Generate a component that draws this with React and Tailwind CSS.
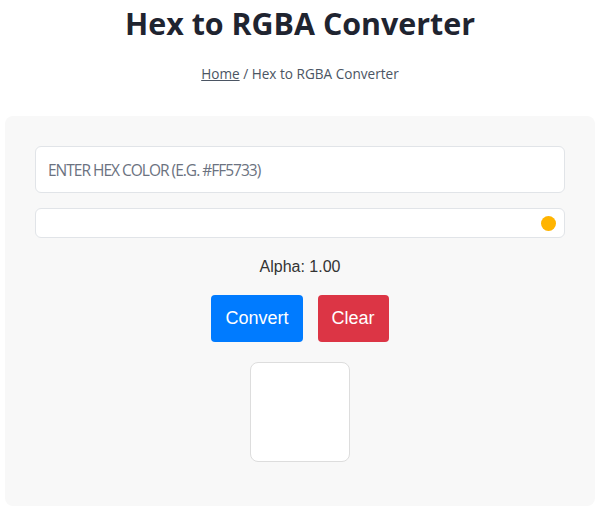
import React, { useState } from 'react';

const App = () => {
  const [hex, setHex] = useState('');
  const [alpha, setAlpha] = useState(1);

  return (
    <div className="min-h-screen bg-white px-[5px] font-['Open_Sans',sans-serif] text-[#1f2430]">
      {/* Header */}
      <h1 className="text-center text-[30.4px] font-bold leading-[48px]">Hex to RGBA Converter</h1>
      <p className="mt-[15px] text-center text-[13.6px] leading-[21px] text-[#4b5563]">
        <a href="#" className="underline">Home</a> / Hex to RGBA Converter
      </p>

      {/* Converter card */}
      <div className="mt-[32px] rounded-lg bg-[#f8f8f8] px-[30px] pt-[30px] pb-[44px]">
        <input
          type="text"
          value={hex}
          onChange={(e) => setHex(e.target.value)}
          placeholder="Enter Hex Color (e.g. #FF5733)"
          className="block h-[47px] w-full rounded-md border border-[#e1e4e8] bg-white px-3 text-[15.5px] tracking-[-1px] text-[#1f2430] outline-none placeholder:uppercase placeholder:text-[#6b7280]"
        />
        <input
          type="range"
          min="0"
          max="1"
          step="0.01"
          value={alpha}
          onChange={(e) => setAlpha(parseFloat(e.target.value))}
          className="mt-[15px] block h-[30px] w-full cursor-pointer appearance-none rounded-md border border-[#e1e4e8] bg-white px-[8px] outline-none [&::-webkit-slider-thumb]:h-[15px] [&::-webkit-slider-thumb]:w-[15px] [&::-webkit-slider-thumb]:appearance-none [&::-webkit-slider-thumb]:rounded-full [&::-webkit-slider-thumb]:bg-[#ffb400]"
        />
        <p className="mt-[17px] text-center font-['Liberation_Sans',Arial,sans-serif] text-base leading-[24px] text-[#333]">
          Alpha: {alpha.toFixed(2)}
        </p>

        <div className="mt-[16px] flex justify-center gap-[15px] font-['Liberation_Sans',Arial,sans-serif]">
          <button className="rounded bg-[#007bff] px-[14px] py-[10px] text-lg leading-[27px] text-white">Convert</button>
          <button
            onClick={() => { setHex(''); setAlpha(1); }}
            className="rounded bg-[#dc3545] px-[14px] py-[10px] text-lg leading-[27px] text-white"
          >
            Clear
          </button>
        </div>

        {/* Color preview */}
        <div className="mx-auto mt-[20px] h-[100px] w-[100px] rounded-lg border border-[#dddddd] bg-white" />
      </div>
    </div>
  );
};

export default App;
